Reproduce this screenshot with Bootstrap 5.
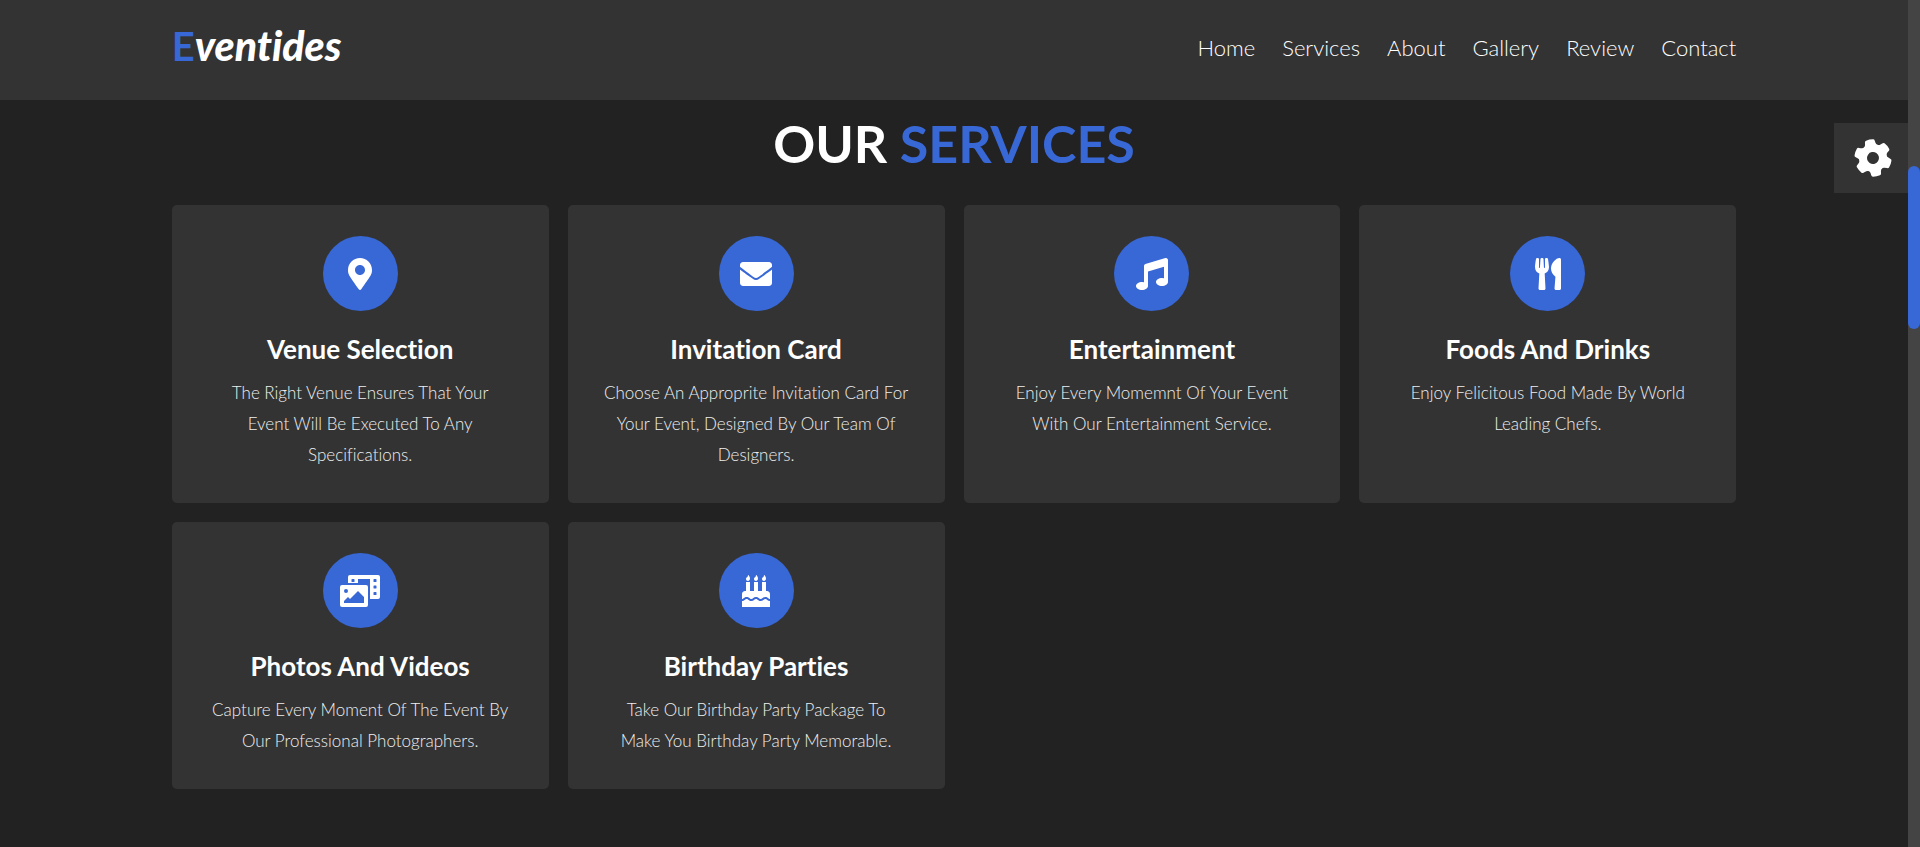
<!DOCTYPE html>
<html lang="en">
<head>
<meta charset="utf-8">
<meta name="viewport" content="width=device-width, initial-scale=1">
<title>Eventides</title>
<link rel="stylesheet" href="https://cdn.jsdelivr.net/npm/bootstrap@5.3.0/dist/css/bootstrap.min.css">
<style>
  :root { --main: #3867d6; --panel: #333; --page: #222; }
  body { background: var(--page); color: #fff; font-family: Lato, "Liberation Sans", sans-serif; font-variant-ligatures: none; }
  .gutters { padding-left: 9%; padding-right: 9%; }
  .accent { color: var(--main); }
  .site-header { background: var(--panel); min-height: 100px; }
  .logo { font-size: 40px; line-height: 48px; font-weight: 900; color: #fff; text-decoration: none; }
  .logo .accent { font-weight: 700; }
  .logo em { font-size: 41px; }
  .menu { gap: 27px; }
  .menu a { font-size: 22px; line-height: 32px; font-weight: 300; color: #fff; text-decoration: none; }
  .menu a:hover { color: var(--main); }
  .section-title { font-size: 52px; line-height: 60px; font-weight: 700; margin: 13px 0 32px; }
  .services { --bs-gutter-x: 19px; --bs-gutter-y: 19px; }
  .service { background: var(--panel); border-radius: 5px; padding: 31px 25px 33px; }
  .service-icon { width: 75px; height: 75px; background: var(--main); }
  .service-icon svg { height: 32px; fill: #fff; }
  .service h2 { font-size: 26px; line-height: 36px; font-weight: 700; margin: 20px 0 10px; }
  .service p { font-size: 17px; line-height: 31px; font-weight: 300; color: #eee; }
  .theme-toggle { top: 123px; right: 0; width: 74px; height: 70px; background: var(--panel); }
  .theme-toggle svg { width: 40px; height: 40px; fill: #fff; }
  .scroll-track { width: 12px; background: #444; }
  .scroll-thumb { background: var(--main); }
</style>
</head>
<body>
<div class="d-flex min-vh-100">
  <div class="flex-grow-1 position-relative">
    <header class="site-header gutters pb-1 d-flex align-items-center justify-content-between">
      <a class="logo pb-1" href="#"><span class="accent">E</span><em>ventides</em></a>
      <nav class="menu d-flex" aria-label="Main">
        <a href="#home">Home</a>
        <a href="#service">Services</a>
        <a href="#about">About</a>
        <a href="#gallery">Gallery</a>
        <a href="#review">Review</a>
        <a href="#contact">Contact</a>
      </nav>
    </header>

    <button type="button" class="theme-toggle btn border-0 rounded-0 p-0 ps-1 position-absolute d-flex align-items-center justify-content-center" aria-label="Theme settings">
      <svg viewBox="0 0 40 40" aria-hidden="true">
        <defs><path id="tooth" d="M12 9.500Q14.700 8 15 3.500Q15.100 1.900 16.500 1.700Q20 1 23.500 1.700Q24.900 1.900 25 3.500Q25.300 8 28 9.500L24 13H16z"/></defs>
        <g transform="rotate(-11 20 20)">
          <circle cx="20" cy="20" r="10" fill="none" stroke="#fff" stroke-width="8"/>
          <use href="#tooth"/>
          <use href="#tooth" transform="rotate(60 20 20)"/>
          <use href="#tooth" transform="rotate(120 20 20)"/>
          <use href="#tooth" transform="rotate(180 20 20)"/>
          <use href="#tooth" transform="rotate(240 20 20)"/>
          <use href="#tooth" transform="rotate(300 20 20)"/>
        </g>
      </svg>
    </button>

    <main class="gutters pb-5" id="service">
      <h1 class="section-title text-center text-uppercase">our <span class="accent">services</span></h1>
      <div class="services row row-cols-1 row-cols-md-2 row-cols-xl-4">
        <div class="col">
          <article class="service h-100 text-center">
            <div class="service-icon rounded-circle mx-auto d-flex align-items-center justify-content-center"><svg viewBox="0 0 384 512" aria-hidden="true"><path d="M172.268 501.67C26.97 291.031 0 269.413 0 192 0 85.961 85.961 0 192 0s192 85.961 192 192c0 77.413-26.97 99.031-172.268 309.67-9.535 13.774-29.93 13.773-39.464 0zM192 272c44.183 0 80-35.817 80-80s-35.817-80-80-80-80 35.817-80 80 35.817 80 80 80z"/></svg></div>
            <h2>Venue Selection</h2>
            <p class="mb-0">The Right Venue Ensures That Your<br> Event Will Be Executed To Any<br> Specifications.</p>
          </article>
        </div>
        <div class="col">
          <article class="service h-100 text-center">
            <div class="service-icon rounded-circle mx-auto d-flex align-items-center justify-content-center"><svg viewBox="0 0 512 512" aria-hidden="true"><path d="M502.3 190.8c3.9-3.1 9.7-.2 9.7 4.7V400c0 26.5-21.5 48-48 48H48c-26.5 0-48-21.5-48-48V195.6c0-5 5.7-7.8 9.7-4.7 22.4 17.4 52.1 39.5 154.1 113.6 21.1 15.4 56.7 47.8 92.2 47.6 35.7.3 72-32.8 92.3-47.6 102-74.1 131.6-96.3 154-113.7zM256 320c23.2.4 56.6-29.2 73.4-41.4 132.7-96.3 142.8-104.7 173.4-128.7 5.8-4.5 9.2-11.5 9.2-18.9v-19c0-26.5-21.5-48-48-48H48c-26.5 0-48 21.5-48 48v19c0 7.4 3.4 14.3 9.2 18.9 30.6 23.9 40.7 32.4 173.4 128.7 16.8 12.2 50.2 41.8 73.4 41.4z"/></svg></div>
            <h2>Invitation Card</h2>
            <p class="mb-0">Choose An Approprite Invitation Card For<br> Your Event, Designed By Our Team Of<br> Designers.</p>
          </article>
        </div>
        <div class="col">
          <article class="service h-100 text-center">
            <div class="service-icon rounded-circle mx-auto d-flex align-items-center justify-content-center"><svg viewBox="0 0 512 512" aria-hidden="true"><path d="M470.38 1.51L150.41 96A32 32 0 0 0 128 126.51v261.41A139 139 0 0 0 96 384c-53 0-96 28.66-96 64s43 64 96 64 96-28.66 96-64V214.32l256-75v184.61a138.4 138.4 0 0 0-32-3.93c-53 0-96 28.66-96 64s43 64 96 64 96-28.65 96-64V32a32 32 0 0 0-41.62-30.49z"/></svg></div>
            <h2>Entertainment</h2>
            <p class="mb-0">Enjoy Every Momemnt Of Your Event<br> With Our Entertainment Service.</p>
          </article>
        </div>
        <div class="col">
          <article class="service h-100 text-center">
            <div class="service-icon rounded-circle mx-auto d-flex align-items-center justify-content-center"><svg viewBox="0 0 416 512" aria-hidden="true"><path d="M207.9 15.2c.8 4.7 16.1 94.5 16.1 128.8 0 52.3-27.8 89.6-68.9 104.6L168 486.7c.7 13.7-10.2 25.3-24 25.3H80c-13.7 0-24.7-11.5-24-25.3l12.9-238.1C27.7 233.6 0 196.2 0 144 0 109.6 15.3 19.9 16.1 15.2 19.3-5.1 61.4-5.4 64 16.3v141.2c1.3 3.4 15.1 3.2 16 0 1.4-25.3 7.9-139.2 8-141.8 3.3-20.8 44.7-20.8 47.9 0 .2 2.7 6.6 116.5 8 141.8.9 3.2 14.8 3.4 16 0V16.3c2.6-21.6 44.8-21.4 47.9-1.1zm119.2 285.7l-15 185.1c-1.2 14 9.9 26 23.9 26h56c13.3 0 24-10.7 24-24V24c0-13.2-10.7-24-24-24-82.5 0-221.4 178.5-64.9 300.9z"/></svg></div>
            <h2>Foods And Drinks</h2>
            <p class="mb-0">Enjoy Felicitous Food Made By World<br> Leading Chefs.</p>
          </article>
        </div>
        <div class="col">
          <article class="service h-100 text-center">
            <div class="service-icon rounded-circle mx-auto d-flex align-items-center justify-content-center"><svg viewBox="0 0 640 512" aria-hidden="true"><path d="M608 0H160a32 32 0 0 0-32 32v96h160V64h192v320h128a32 32 0 0 0 32-32V32a32 32 0 0 0-32-32zM232 103a9 9 0 0 1-9 9h-30a9 9 0 0 1-9-9V73a9 9 0 0 1 9-9h30a9 9 0 0 1 9 9zm352 208a9 9 0 0 1-9 9h-30a9 9 0 0 1-9-9v-30a9 9 0 0 1 9-9h30a9 9 0 0 1 9 9zm0-104a9 9 0 0 1-9 9h-30a9 9 0 0 1-9-9v-30a9 9 0 0 1 9-9h30a9 9 0 0 1 9 9zm0-104a9 9 0 0 1-9 9h-30a9 9 0 0 1-9-9V73a9 9 0 0 1 9-9h30a9 9 0 0 1 9 9zm-168 57H32a32 32 0 0 0-32 32v288a32 32 0 0 0 32 32h384a32 32 0 0 0 32-32V192a32 32 0 0 0-32-32zM96 224a32 32 0 1 1-32 32 32 32 0 0 1 32-32zm288 224H64v-32l64-64 32 32 128-128 96 96z"/></svg></div>
            <h2>Photos And Videos</h2>
            <p class="mb-0">Capture Every Moment Of The Event By<br> Our Professional Photographers.</p>
          </article>
        </div>
        <div class="col">
          <article class="service h-100 text-center">
            <div class="service-icon rounded-circle mx-auto d-flex align-items-center justify-content-center"><svg viewBox="0 0 448 512" aria-hidden="true"><path d="M448 384c-28.02 0-31.26-32-74.5-32-43.43 0-46.825 32-74.75 32-27.695 0-31.454-32-74.75-32-42.842 0-47.218 32-74.5 32-28.148 0-31.202-32-74.75-32-43.547 0-46.653 32-74.75 32v-80c0-26.5 21.5-48 48-48h16V112h64v144h64V112h64v144h64V112h64v144h16c26.5 0 48 21.5 48 48v80zm0 128H0v-96c43.356 0 46.767-32 74.75-32 27.951 0 31.253 32 74.75 32 42.843 0 47.217-32 74.5-32 28.148 0 31.201 32 74.75 32 43.357 0 46.767-32 74.75-32 27.488 0 31.252 32 74.5 32v96zM96 96c-17.75 0-32-14.25-32-32 0-31 32-23 32-64 12 0 32 29.5 32 56s-14.25 40-32 40zm128 0c-17.75 0-32-14.25-32-32 0-31 32-23 32-64 12 0 32 29.5 32 56s-14.25 40-32 40zm128 0c-17.75 0-32-14.25-32-32 0-31 32-23 32-64 12 0 32 29.5 32 56s-14.25 40-32 40z"/></svg></div>
            <h2>Birthday Parties</h2>
            <p class="mb-0">Take Our Birthday Party Package To<br> Make You Birthday Party Memorable.</p>
          </article>
        </div>
      </div>
    </main>
  </div>
  <div class="scroll-track flex-shrink-0" aria-hidden="true">
    <div class="scroll-thumb rounded-pill" style="margin-top: 166px; height: 163px"></div>
  </div>
</div>
<script src="https://cdn.jsdelivr.net/npm/bootstrap@5.3.0/dist/js/bootstrap.bundle.min.js"></script>
</body>
</html>
